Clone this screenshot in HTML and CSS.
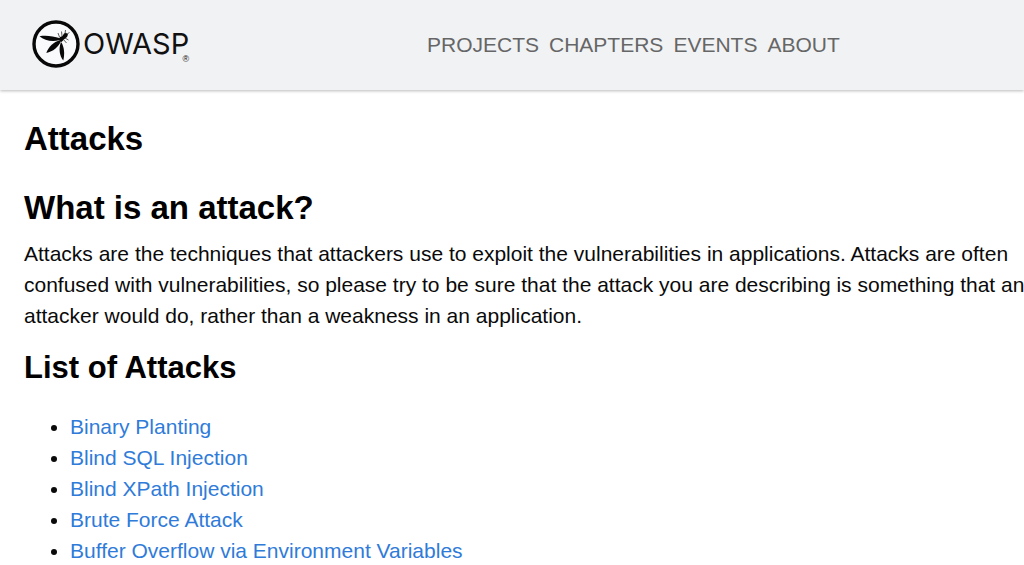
FILE: index.html
```html
<!DOCTYPE html>
<html lang="en">
<head>
<meta charset="utf-8">
<meta name="viewport" content="width=device-width, initial-scale=1">
<title>Attacks | OWASP</title>
<link rel="stylesheet" href="styles.css">
</head>
<body>
<header class="site-header">
  <a class="brand" href="#" aria-label="OWASP home">
    <svg class="brand-mark" viewBox="0 0 48 48" aria-hidden="true">
      <circle cx="24" cy="24" r="22" fill="#f9fafb" stroke="#080808" stroke-width="3.4"/>
      <g fill="#080808">
        <path d="M7.5 16.2 C14 15.2 21 16 28 18.3 L27 20.3 C20 22 12 20.5 7.5 16.2 Z"/>
        <path d="M28.5 20 C21 22 16.5 27 14.3 33 C21 31.5 26.5 27 29 21 Z"/>
        <path d="M28.8 22.5 C26.5 29 27.5 36 31.3 40.5 C33 33 32 27 29.5 22.5 Z"/>
        <path d="M28 17 L30.5 16 L32 13.5 L34 12.8 L36 14.5 L35 17 L32.5 19 L29.5 22 L26.5 19.5 Z"/>
      </g>
      <path d="M27.5 17 L26 13 M30 16 L29.5 11.5 M33 14 L33.5 10 M35 14 L37.5 12.5 M33 18 L36.5 20 M31 19 L34.5 23" fill="none" stroke="#333" stroke-width=".8"/>
    </svg>
    <span class="brand-name">OWASP<span class="brand-reg">®</span></span>
  </a>
  <nav class="main-nav" aria-label="Main">
    <a href="#">PROJECTS</a>
    <a href="#">CHAPTERS</a>
    <a href="#">EVENTS</a>
    <a href="#">ABOUT</a>
  </nav>
</header>
<main class="content">
  <h1>Attacks</h1>
  <h2 class="question">What is an attack?</h2>
  <p>Attacks are the techniques that attackers use to exploit the vulnerabilities in applications. Attacks are often confused with vulnerabilities, so please try to be sure that the attack you are describing is something that an attacker would do, rather than a weakness in an application.</p>
  <h2 class="list-title">List of Attacks</h2>
  <ul class="attack-list">
    <li><a href="#">Binary Planting</a></li>
    <li><a href="#">Blind SQL Injection</a></li>
    <li><a href="#">Blind XPath Injection</a></li>
    <li><a href="#">Brute Force Attack</a></li>
    <li><a href="#">Buffer Overflow via Environment Variables</a></li>
  </ul>
</main>
</body>
</html>
```
FILE: styles.css
```css
* { box-sizing: border-box; }
body { margin: 0; background: #fff; color: #0a0a0a; font: 21px/31px "Liberation Sans", Arial, sans-serif; overflow-x: hidden; }
a { color: #2f7bd9; text-decoration: none; }
.site-header { display: grid; grid-template-columns: 395px 1fr; align-items: center; padding: 20px 32px 22px; background: #f1f2f4; box-shadow: 0 1px 3px #bbb; }
.brand { display: flex; align-items: center; color: #111; }
.brand-mark { width: 48px; height: 48px; }
.brand-name { position: relative; margin-left: 3px; font: 29px/32px Inter, sans-serif; }
.brand-reg { position: absolute; right: 0; bottom: -4px; font: 9px/10px "Liberation Sans", Arial, sans-serif; }
.main-nav { display: flex; gap: 10px; }
.main-nav a { color: #666; }
.content { padding: 26px 0 0 24px; }
h1, h2 { margin: 0; color: #000; font-size: 33px; line-height: 46px; }
.question { margin-top: 23px; }
p { margin: 7px -4px 0 0; }
.list-title { margin-top: 14px; font-size: 31px; }
.attack-list { margin: 20px 0 0; padding-left: 46px; }
```
